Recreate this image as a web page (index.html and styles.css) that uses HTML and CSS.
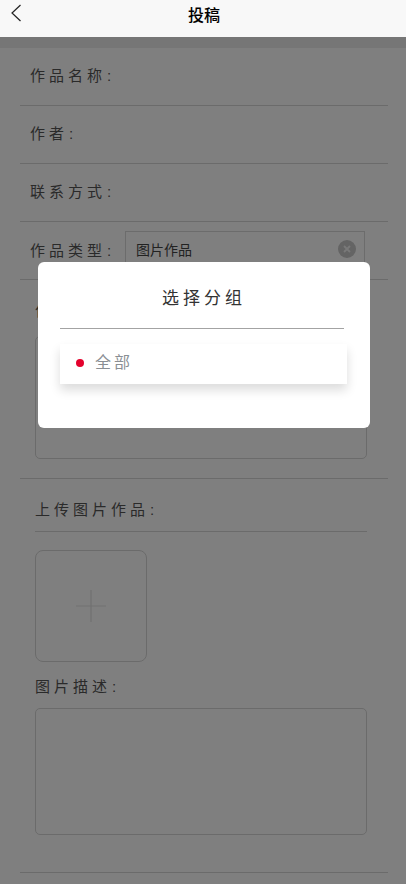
FILE: index.html
```html
<!DOCTYPE html>
<html lang="zh">
<head>
<meta charset="utf-8">
<title>投稿</title>
<link rel="stylesheet" href="styles.css">
</head>
<body>
<header class="nav">
  <svg class="back" width="12" height="20" viewBox="0 0 12 20"><path d="M10.5 2 2 10l8.5 8" fill="none" stroke="#222" stroke-width="1.2"/></svg>
  <h1 class="nav-title">投稿</h1>
</header>
<main class="page">
  <div class="band"></div>
  <div class="rows">
    <div class="row"><span class="label">作品名称<b class="colon">:</b></span></div>
    <div class="row"><span class="label">作者<b class="colon">:</b></span></div>
    <div class="row"><span class="label">联系方式<b class="colon">:</b></span></div>
    <div class="row row-type">
      <span class="label label-type">作品类型<b class="colon">:</b></span>
      <div class="select">
        <span>图片作品</span>
        <svg class="clear" width="18" height="18" viewBox="0 0 18 18"><circle cx="9" cy="9" r="9" fill="#c8c8c8"/><path d="M6 6l6 6M12 6l-6 6" stroke="#f2f2f2" stroke-width="1.8"/></svg>
      </div>
    </div>
    <section class="block block-intro">
      <div class="label">作品简介<b class="colon">:</b></div>
      <div class="textarea textarea-intro"></div>
    </section>
    <section class="block block-upload">
      <div class="label upload-label">上传图片作品<b class="colon">:</b></div>
      <div class="upload"><svg width="32" height="32" viewBox="0 0 32 32"><path d="M16 0v32M1 16h30" stroke="#e2e2e2" stroke-width="1.2"/></svg></div>
      <div class="label desc-label">图片描述<b class="colon">:</b></div>
      <div class="textarea textarea-desc"></div>
    </section>
  </div>
</main>
<div class="overlay"></div>
<div class="modal">
  <div class="modal-title">选择分组</div>
  <div class="modal-item"><i class="dot"></i><span class="item-text">全部</span></div>
</div>
</body>
</html>
```
FILE: styles.css
```css
* { box-sizing: border-box; }
html, body { margin: 0; height: 884px; overflow: hidden; }
body { background: #fff; font-family: "Noto Sans CJK SC", "Liberation Sans", sans-serif; color: #333; position: relative; }
.nav { height: 37px; background: #f8f8f8; display: flex; align-items: flex-start; justify-content: center; position: relative; z-index: 2; padding-left: 2px; }
.back { position: absolute; left: 10px; top: 3px; }
.nav-title { margin: 0; font-size: 16px; font-weight: 500; color: #000; line-height: 29px; }
.band { height: 11px; background: #ededed; }
.rows { margin: 0 18px 0 20px; }
.row { height: 58px; border-bottom: 1px solid #d6d6d6; padding: 0 0 3px 10px; display: flex; align-items: center; }
.label { font-size: 15px; letter-spacing: 4px; line-height: 20px; color: #555; }
.colon { font-weight: 400; margin-left: 1px; font-family: "Liberation Sans", sans-serif; }
.row-type { align-items: flex-start; padding-top: 9px; overflow: hidden; }
.label-type { width: 95px; flex: none; margin-top: 9px; }
.select { width: 240px; height: 48px; border: 1px solid #d9d9d9; padding: 6px 10px; font-size: 14px; line-height: 22px; color: #444; position: relative; flex: none; }
.clear { position: absolute; right: 8px; top: 8px; }
.block { border-bottom: 1px solid #d6d6d6; padding: 0 20px 0 15px; }
.block-intro { height: 199px; padding-top: 20px; }
.textarea { border: 1px solid #d6d6d6; border-radius: 5px; width: 332px; }
.textarea-intro { height: 123px; margin-top: 15px; }
.block-upload { height: 394px; padding-top: 20px; }
.upload-label { height: 33px; border-bottom: 1px solid #d6d6d6; width: 332px; }
.upload { width: 112px; height: 112px; margin-top: 18px; border: 1px solid #d6d6d6; border-radius: 8px; display: flex; align-items: center; justify-content: center; }
.desc-label { margin-top: 14px; }
.textarea-desc { height: 127px; margin-top: 11px; }
.overlay { position: absolute; left: 0; right: 0; top: 37px; bottom: 0; background: rgba(0,0,0,.5); z-index: 1; }
.modal { position: absolute; left: 38px; top: 262px; width: 332px; height: 166px; background: #fff; border-radius: 6px; z-index: 3; padding: 20px 26px 0 22px; }
.modal-title { height: 47px; border-bottom: 1px solid #a3a3a3; text-align: center; font-size: 17px; letter-spacing: 4px; line-height: 30px; color: #333; padding-left: 4px; }
.modal-item { width: 287px; height: 40px; margin-top: 15px; background: #fff; box-shadow: 0 6px 10px rgba(0,0,0,.14); display: flex; align-items: center; padding-left: 16px; font-size: 16px; letter-spacing: 3px; color: #8a8f94; }
.item-text { margin-bottom: 6px; }
.dot { width: 8px; height: 8px; border-radius: 50%; background: #e4022d; margin: 0 11px 2px 0; }
```
